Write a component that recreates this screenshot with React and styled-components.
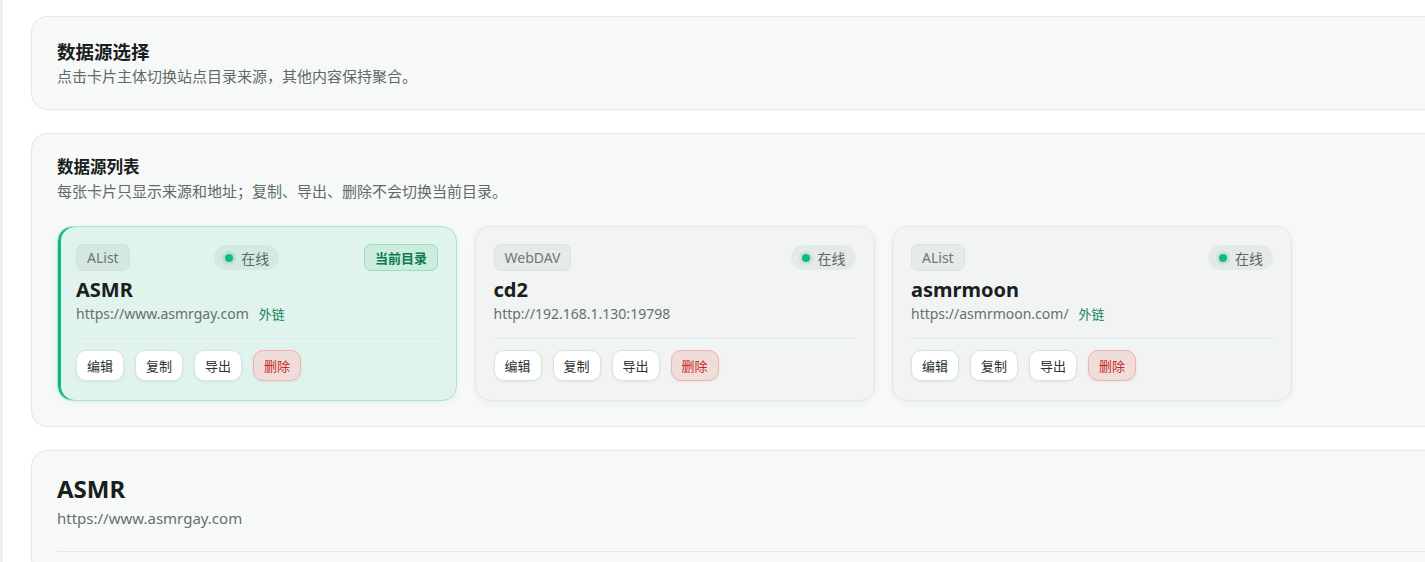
import React from 'react'
import styled, { createGlobalStyle } from 'styled-components'

const GlobalStyle = createGlobalStyle`
    html, body {
        margin: 0;
        padding: 0;
        background: #ffffff;
        overflow: hidden;
    }
    body {
        font-family: "Noto Sans", "Noto Sans CJK SC", sans-serif;
        color: #17201c;
    }
`

const Shell = styled.div`
    display: flex;
    min-height: 562px;
`

const SideEdge = styled.div`
    flex: 0 0 3px;
    background: #eef2f1;
`

const Main = styled.main`
    flex: 0 0 auto;
    width: 1440px;
    padding: 16px 0 0 28px;
    display: flex;
    flex-direction: column;
    gap: 23px;
`

const Panel = styled.section`
    background: #f7f9f8;
    border: 1px solid #e3e9e7;
    border-radius: 16px;
    padding: ${({pad}) => pad || `22px 25px`};
`

const PanelTitle = styled.h2`
    margin: 0;
    font-size: ${({size}) => size || 18}px;
    line-height: ${({size}) => Math.round((size || 18) * 1.35)}px;
    font-weight: 700;
    color: #17201c;
`

const PanelHint = styled.p`
    margin: ${({top}) => top ?? 1}px 0 0;
    font-size: 15px;
    line-height: 22px;
    color: #5f6b66;
`

const CardGrid = styled.div`
    margin-top: 24px;
    display: grid;
    grid-template-columns: repeat(3, 400px);
    gap: 17.5px;
`

const Card = styled.div`
    background: ${({active}) => active ? `#e0f3ec` : `#f2f4f3`};
    border: 1px solid ${({active}) => active ? `#a9e3c9` : `#e1e8e5`};
    border-radius: 15px;
    padding: 17px 18px 19px;
    box-shadow: ${({active}) => active
        ? `inset 3px 0 0 #10b981, 0 2px 6px rgba(20, 60, 45, 0.06)`
        : `0 2px 6px rgba(20, 60, 45, 0.06)`};
`

const CardTop = styled.div`
    display: flex;
    align-items: center;
    justify-content: space-between;
`

const TypeTag = styled.span`
    display: inline-flex;
    align-items: center;
    height: 27px;
    box-sizing: border-box;
    padding: 0 10px;
    border-radius: 7px;
    font-size: 14px;
    color: #6c7873;
    background: ${({active}) => active ? `#d4e8e0` : `#e5eaea`};
    border: 1px solid ${({active}) => active ? `#cfe3db` : `#dbe3e1`};
`

const Status = styled.span`
    display: inline-flex;
    align-items: center;
    gap: 8px;
    height: 25px;
    padding: 0 10px 0 11px;
    border-radius: 13px;
    font-size: 14px;
    color: #5d6964;
    background: rgba(16, 70, 45, 0.055);
`

const Dot = styled.i`
    width: 8px;
    height: 8px;
    border-radius: 50%;
    background: #10b981;
    box-shadow: 0 0 0 3px rgba(16, 185, 129, 0.13);
`

const CurrentBadge = styled.span`
    display: inline-flex;
    align-items: center;
    height: 27px;
    box-sizing: border-box;
    padding: 0 10px;
    border-radius: 7px;
    font-size: 13px;
    font-weight: 700;
    color: #0d7a4f;
    background: #cbeedc;
    border: 1px solid #9fdcbf;
`

const CardName = styled.div`
    margin-top: 6px;
    font-size: 20px;
    line-height: 26px;
    font-weight: 700;
    color: #17201c;
`

const UrlRow = styled.div`
    display: flex;
    align-items: baseline;
    gap: 10px;
    margin-top: ${({lift}) => lift || 0}px;
    font-size: ${({size}) => size || 14}px;
    line-height: 22px;
    color: #65716c;
`

const ExtLink = styled.a`
    font-size: 13px;
    color: #12855a;
    text-decoration: none;
`

const Divider = styled.hr`
    margin: ${({gap}) => gap || `13px 0 11px`};
    border: 0;
    border-top: 1px solid ${({soft}) => soft ? `#e2e8e6` : `#d9ebe4`};
`

const Actions = styled.div`
    display: flex;
    gap: 11px;
`

const ActionButton = styled.button`
    height: 31px;
    padding: 0 10px;
    font-family: inherit;
    font-size: 13px;
    border-radius: 10px;
    cursor: pointer;
    color: ${({danger}) => danger ? `#c62b2b` : `#2a3330`};
    background: ${({danger}) => danger ? `#f0dcd8` : `#ffffff`};
    border: 1px solid ${({danger}) => danger ? `#efb3b0` : `#d7e4df`};
    box-shadow: 0 1px 3px rgba(20, 50, 40, 0.07);
`

const sources = [
    { type: `AList`, name: `ASMR`, url: `https://www.asmrgay.com`, link: true, active: true },
    { type: `WebDAV`, name: `cd2`, url: `http://192.168.1.130:19798` },
    { type: `AList`, name: `asmrmoon`, url: `https://asmrmoon.com/`, link: true },
]

const SourceCard = ({ type, name, url, link, active }) => (
    <Card active={active}>
        <CardTop>
            <TypeTag active={active}>{type}</TypeTag>
            <Status><Dot />在线</Status>
            {active && <CurrentBadge>当前目录</CurrentBadge>}
        </CardTop>
        <CardName>{name}</CardName>
        <UrlRow>
            <span>{url}</span>
            {link && <ExtLink href="#">外链</ExtLink>}
        </UrlRow>
        <Divider />
        <Actions>
            <ActionButton>编辑</ActionButton>
            <ActionButton>复制</ActionButton>
            <ActionButton>导出</ActionButton>
            <ActionButton danger>删除</ActionButton>
        </Actions>
    </Card>
)

export default function App() {
    const current = sources.find(s => s.active)
    return (
        <Shell>
            <GlobalStyle />
            <SideEdge />
            <Main>
                <Panel>
                    <PanelTitle size={18.5}>数据源选择</PanelTitle>
                    <PanelHint>点击卡片主体切换站点目录来源，其他内容保持聚合。</PanelHint>
                </Panel>
                <Panel pad="22px 25px 25px">
                    <PanelTitle size={16.5}>数据源列表</PanelTitle>
                    <PanelHint top={2}>每张卡片只显示来源和地址；复制、导出、删除不会切换当前目录。</PanelHint>
                    <CardGrid>
                        {sources.map(s => <SourceCard key={s.name} {...s} />)}
                    </CardGrid>
                </Panel>
                <Panel>
                    <PanelTitle size={24}>{current.name}</PanelTitle>
                    <UrlRow size={15} lift={2}>{current.url}</UrlRow>
                    <Divider soft gap="22px 0 0" />
                </Panel>
            </Main>
        </Shell>
    )
}
